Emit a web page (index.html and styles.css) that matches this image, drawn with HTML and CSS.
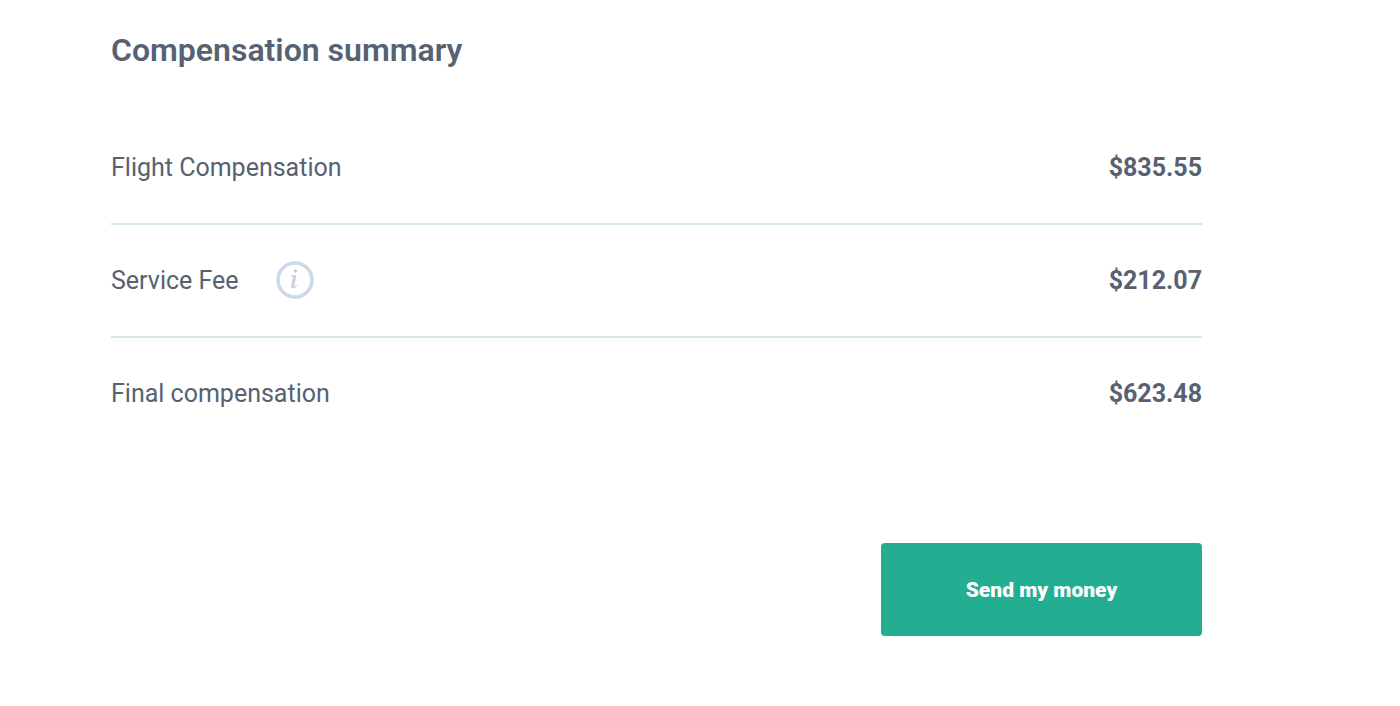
FILE: index.html
```html
<!DOCTYPE html>
<html lang="en">
<head>
<meta charset="utf-8">
<meta name="viewport" content="width=device-width, initial-scale=1">
<title>Compensation summary</title>
<link rel="stylesheet" href="styles.css">
</head>
<body>
<main class="summary">
  <h1 class="title">Compensation summary</h1>
  <dl class="rows">
    <div class="row">
      <dt class="label">Flight Compensation</dt>
      <dd class="amount">$835.55</dd>
    </div>
    <div class="row">
      <dt class="label">Service Fee
        <button class="info" type="button" aria-label="About the service fee">
          <svg viewBox="0 0 38 38" width="38" height="38" aria-hidden="true">
            <circle cx="19" cy="18" r="17" fill="none" stroke="#cbd9e8" stroke-width="3.6"/>
            <circle cx="19.6" cy="9" r="1.8" fill="#c6d2df"/>
            <path d="M15 13.6L20.4 12.8L18.2 23.6Q18 24.6 18.7 24.3Q19.6 23.7 20.5 22.6L21.2 23.2Q19 26.4 16.8 26.3Q14.7 26.1 15.2 23.8L17 15.2Q17 14.4 14.9 14.5Z" fill="#c6d2df"/>
          </svg>
        </button>
      </dt>
      <dd class="amount">$212.07</dd>
    </div>
    <div class="row">
      <dt class="label">Final compensation</dt>
      <dd class="amount">$623.48</dd>
    </div>
  </dl>
  <div class="actions">
    <button class="send" type="button">Send my money</button>
  </div>
</main>
</body>
</html>
```
FILE: styles.css
```css
* {
  box-sizing: border-box;
}

body {
  margin: 0;
  background: #fff;
  color: #566272;
  font-family: Roboto, "Liberation Sans", sans-serif;
}

.summary {
  padding: 30px 198px 70px 111px;
}

.title {
  margin: 0;
  font-size: 32px;
  font-weight: 600;
  line-height: 40px;
}

.rows {
  margin: 42px 0 0;
}

.row {
  display: flex;
  align-items: center;
  justify-content: space-between;
  height: 113px;
  border-bottom: 2px solid #d6e4ec;
}

.row:last-child {
  border-bottom-color: transparent;
}

.label {
  display: flex;
  align-items: center;
  gap: 37px;
  font-size: 25px;
  line-height: 32px;
}

.amount {
  margin: 0;
  font-size: 25px;
  font-weight: 700;
  line-height: 32px;
}

.info {
  padding: 0;
  border: 0;
  background: none;
  cursor: pointer;
}

.info svg {
  display: block;
  overflow: visible;
}

.actions {
  display: flex;
  justify-content: flex-end;
  margin-top: 92px;
}

.send {
  width: 321px;
  height: 93px;
  border: 0;
  border-radius: 4px;
  background: #23ae92;
  color: #fff;
  font: 900 21px/28px Roboto, "Liberation Sans", sans-serif;
  cursor: pointer;
}
```
